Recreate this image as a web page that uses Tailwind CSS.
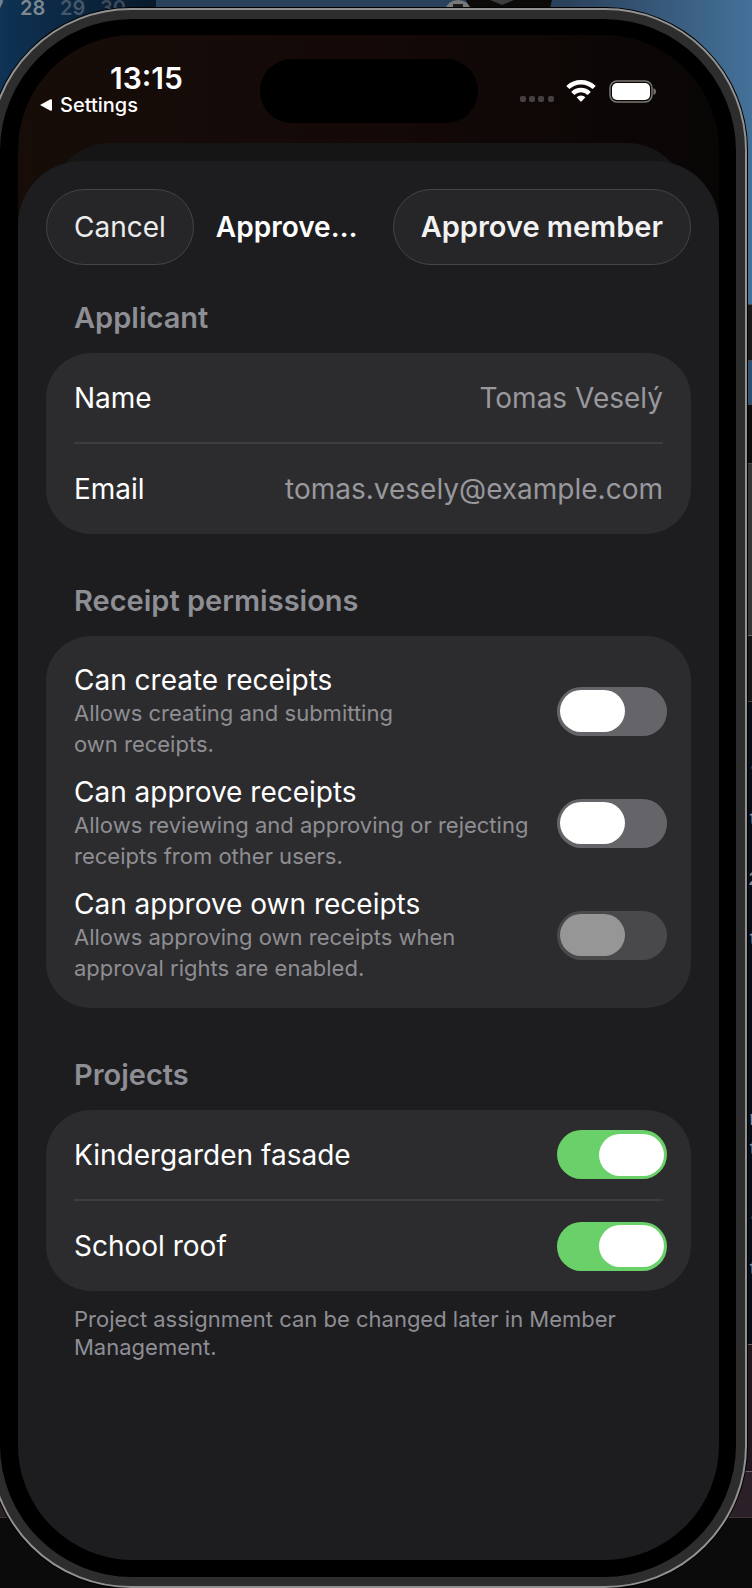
<!DOCTYPE html>
<html lang="en">
<head>
    <meta charset="utf-8">
    <meta name="viewport" content="width=device-width, initial-scale=1.0">
    <title>Approve member</title>
    <script src="https://cdn.jsdelivr.net/npm/@tailwindcss/browser@4"></script>
</head>
<body class="relative overflow-hidden bg-[#0b0b0b] font-[Inter,'Liberation_Sans',sans-serif] text-white antialiased">

    <!-- desktop behind the device -->
    <div class="absolute inset-0 flex flex-col overflow-hidden" aria-hidden="true">
        <div class="flex h-[304px] shrink-0 items-start bg-linear-to-r from-[#2a415b] from-75% to-[#447199]">
            <div class="flex h-full w-[156px] items-start bg-linear-to-r from-[#0e3354] to-[#08192b] text-xl leading-4 font-semibold">
                <span class="w-5 text-[#6f8396] -indent-2">7</span>
                <span class="w-10 text-[#7d8791]">28</span>
                <span class="w-10 text-[#45566a]">29</span>
                <span class="text-[#3d4a5a]">30</span>
            </div>
            <svg class="ml-72 h-3 w-28" viewBox="0 0 112 12">
                <path d="M22 0h86l-3 12H28z" fill="#0b0a08"/>
                <path d="M46 0l12 5 12-5z" fill="#3d3d3d"/>
                <path d="M1 10Q4 0 14 0q10 0 13 10z" fill="#77797b"/>
                <path d="M9 4h10v3H9z" fill="#1a1a1a"/>
            </svg>
        </div>
        <div class="h-[57px] shrink-0 border-y border-[#4a4a4a] bg-[#191919]"></div>
        <div class="h-[43px] shrink-0 bg-[#2c4f70]"></div>
        <div class="h-[60px] shrink-0 border-y border-[#4a4a4a] bg-[#0c0c0c]"></div>
        <div class="h-[172px] shrink-0 border-b border-[#666] bg-[#343434]"></div>
        <div class="h-[66px] shrink-0 border-b border-[#444] bg-[#151515]"></div>
        <div class="flex h-[642px] shrink-0 justify-end bg-[#090d15] pt-[43px]">
            <pre class="w-1 overflow-hidden font-['Liberation_Mono',monospace] text-xl leading-[30px] text-[#8d8f92]">;

t

2

t





r
t

;

t</pre>
        </div>
        <div class="h-[128px] shrink-0 border-y border-[#6a6066] bg-[#21161d]"></div>
        <div class="h-[46px] shrink-0 border-b border-[#3d353a] bg-[#2b2028]"></div>
    </div>

    <!-- device frame -->
    <div class="relative mt-2 mr-[5px] -ml-[11px] rounded-[142px] border-2 border-[#929292] bg-[#2d2d2d] p-[9px] shadow-[0_0_0_1px_#000]">
        <div class="rounded-[132px] bg-black pt-4 pr-[17px] pb-[17px] pl-[18px]">
            <div class="flex min-h-[1525px] flex-col overflow-hidden rounded-[115px] bg-linear-to-r from-[#160d09] via-[#140907] to-[#080605]">

                <header class="grid h-[108px] shrink-0 grid-cols-[1fr_218px_1fr] pt-6">
                    <div class="flex flex-col items-start pl-[22px]">
                        <time class="pl-[70px] text-[30px] leading-[38px] font-semibold">13:15</time>
                        <a href="#" class="flex items-center gap-2 text-xl leading-4 font-medium">
                            <svg class="h-3 w-3" viewBox="0 0 12 12" fill="#fff"><path d="M0 6L10.500 .3Q12 0 12 1v10q0 1-1.500 .7z"/></svg>
                            Settings
                        </a>
                    </div>
                    <div class="h-16 rounded-full bg-black"></div>
                    <div class="flex h-16 items-center pl-[42px]">
                        <svg class="h-6 w-[136px]" viewBox="0 0 136 24">
                            <g fill="#454140">
                                <rect x="0" y="17" width="6" height="6" rx="2"/>
                                <rect x="9" y="17" width="6" height="6" rx="2"/>
                                <rect x="18" y="17" width="6" height="6" rx="2"/>
                                <rect x="28" y="17" width="6" height="6" rx="2"/>
                            </g>
                            <g fill="none" stroke="#fff" stroke-width="4.500">
                                <path d="M47.800 8.500a19 19 0 0 1 26.400 0"/>
                                <path d="M52.800 14.500a11.500 11.500 0 0 1 16.400 0"/>
                            </g>
                            <path d="M56.600 18.300a6 6 0 0 1 8.800 0L61.700 22.200q-.7 .7-1.400 0z" fill="#fff"/>
                            <rect x="90" y="2" width="42" height="21" rx="7" fill="none" stroke="#7b7876" stroke-width="1.500"/>
                            <rect x="92" y="4" width="38" height="17" rx="5" fill="#fff"/>
                            <path d="M133.500 9q2.500 1 2.500 3.500t-2.500 3.500z" fill="#7b7876"/>
                        </svg>
                    </div>
                </header>

                <!-- sheet underneath -->
                <div class="mx-8 -mb-12 h-[66px] shrink-0 rounded-t-[60px] bg-[#151515]"></div>

                <form class="flex-1 rounded-t-[64px] bg-[#1d1d1f] px-7 pt-7">
                    <div class="flex h-[76px] items-center">
                        <button type="button" class="h-full shrink-0 rounded-full border border-[#454547] bg-[#262628] px-[27px] text-[28px] text-[#ececec]">Cancel</button>
                        <h1 class="flex-1 truncate pl-[22px] text-[28px] font-semibold">Approve…</h1>
                        <button type="submit" class="h-full shrink-0 rounded-full border border-[#454547] bg-[#262628] px-[27px] text-[29px] font-semibold text-[#f2f2f2]">Approve member</button>
                    </div>

                    <div class="flex flex-col gap-12 pt-[34px]">
                        <section>
                            <h2 class="mb-4 px-7 text-[29px] leading-[38px] font-semibold text-[#8e8e95]">Applicant</h2>
                            <dl class="rounded-[45px] bg-[#2c2c2e] px-7 text-[28px]">
                                <div class="flex h-[91px] items-center justify-between border-b-2 border-[#3d3d40]">
                                    <dt>Name</dt>
                                    <dd class="text-[#98989d]">Tomas Veselý</dd>
                                </div>
                                <div class="flex h-[90px] items-center justify-between">
                                    <dt>Email</dt>
                                    <dd class="text-[#98989d]">tomas.vesely@example.com</dd>
                                </div>
                            </dl>
                        </section>

                        <section>
                            <h2 class="mb-4 px-7 text-[29px] leading-[38px] font-semibold text-[#8e8e95]">Receipt permissions</h2>
                            <div class="flex flex-col gap-[14px] rounded-[45px] bg-[#2c2c2e] px-7 pt-[26px] pb-6">
                                <label class="flex items-center justify-between">
                                    <span>
                                        <span class="block text-[28px] leading-9">Can create receipts</span>
                                        <span class="block text-[22px] leading-[31px] text-[#8e8e93]">Allows creating and submitting<br>own receipts.</span>
                                    </span>
                                    <input type="checkbox" role="switch" class="-mr-1 flex h-[49px] w-[110px] shrink-0 appearance-none items-center rounded-full bg-[#656469] px-[3px] before:h-[42px] before:w-[65px] before:rounded-full before:bg-white checked:justify-end checked:bg-[#69d06a]">
                                </label>
                                <label class="flex items-center justify-between">
                                    <span>
                                        <span class="block text-[28px] leading-9">Can approve receipts</span>
                                        <span class="block text-[22px] leading-[31px] whitespace-nowrap text-[#8e8e93]">Allows reviewing and approving or rejecting<br>receipts from other users.</span>
                                    </span>
                                    <input type="checkbox" role="switch" class="-mr-1 flex h-[49px] w-[110px] shrink-0 appearance-none items-center rounded-full bg-[#656469] px-[3px] before:h-[42px] before:w-[65px] before:rounded-full before:bg-white checked:justify-end checked:bg-[#69d06a]">
                                </label>
                                <label class="flex items-center justify-between">
                                    <span>
                                        <span class="block text-[28px] leading-9">Can approve own receipts</span>
                                        <span class="block text-[22px] leading-[31px] text-[#8e8e93]">Allows approving own receipts when<br>approval rights are enabled.</span>
                                    </span>
                                    <input type="checkbox" role="switch" disabled class="-mr-1 flex h-[49px] w-[110px] shrink-0 appearance-none items-center rounded-full bg-[#49494b] px-[3px] before:h-[42px] before:w-[65px] before:rounded-full before:bg-[#969696]">
                                </label>
                            </div>
                        </section>

                        <section>
                            <h2 class="mb-4 px-7 text-[29px] leading-[38px] font-semibold text-[#8e8e95]">Projects</h2>
                            <div class="rounded-[45px] bg-[#2c2c2e] px-7 text-[28px]">
                                <label class="flex h-[91px] items-center justify-between border-b-2 border-[#3d3d40]">
                                    Kindergarden fasade
                                    <input type="checkbox" role="switch" checked class="-mr-1 flex h-[49px] w-[110px] shrink-0 appearance-none items-center rounded-full bg-[#656469] px-[3px] before:h-[42px] before:w-[65px] before:rounded-full before:bg-white checked:justify-end checked:bg-[#69d06a]">
                                </label>
                                <label class="flex h-[90px] items-center justify-between">
                                    School roof
                                    <input type="checkbox" role="switch" checked class="-mr-1 flex h-[49px] w-[110px] shrink-0 appearance-none items-center rounded-full bg-[#656469] px-[3px] before:h-[42px] before:w-[65px] before:rounded-full before:bg-white checked:justify-end checked:bg-[#69d06a]">
                                </label>
                            </div>
                            <p class="mt-[14px] px-7 text-[22px] leading-7 text-[#8e8e95]">Project assignment can be changed later in Member Management.</p>
                        </section>
                    </div>
                </form>
            </div>
        </div>
    </div>
</body>
</html>
